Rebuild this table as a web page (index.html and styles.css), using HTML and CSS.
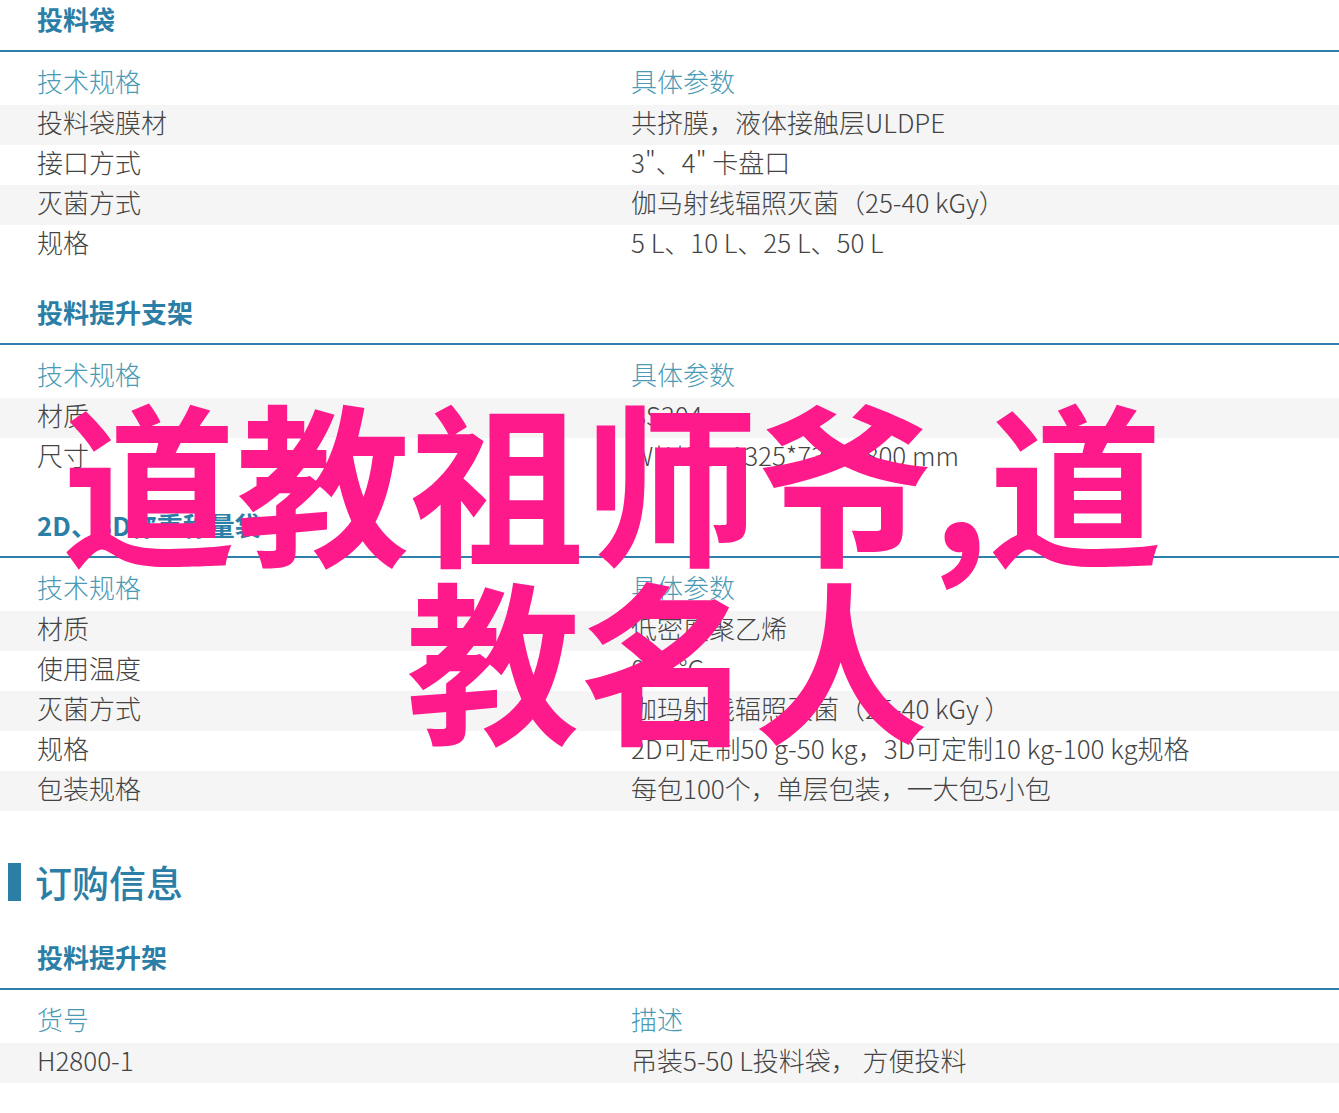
FILE: index.html
```html
<!DOCTYPE html>
<html lang="zh-CN">

<head>
  <meta charset="UTF-8">
  <meta name="viewport" content="width=device-width, initial-scale=1.0">
  <title>道教祖师爷,道教名人</title>

  <link rel="stylesheet" href="styles.css">
</head>

<body>
  <div id="page">
    <section class="spec">
      <h3 class="spec-title">投料袋</h3>
      <div class="spec-table">
        <div class="row head"><span>技术规格</span><span>具体参数</span></div>
        <div class="row"><span>投料袋膜材</span><span>共挤膜，液体接触层ULDPE</span></div>
        <div class="row"><span>接口方式</span><span>3"、4" 卡盘口</span></div>
        <div class="row"><span>灭菌方式</span><span>伽马射线辐照灭菌（25-40 kGy）</span></div>
        <div class="row"><span>规格</span><span>5 L、10 L、25 L、50 L</span></div>
      </div>
    </section>

    <section class="spec">
      <h3 class="spec-title">投料提升支架</h3>
      <div class="spec-table">
        <div class="row head"><span>技术规格</span><span>具体参数</span></div>
        <div class="row"><span>材质</span><span>SS304</span></div>
        <div class="row"><span>尺寸</span><span>W*L*H：1325*730*1800 mm</span></div>
      </div>
    </section>

    <section class="spec">
      <h3 class="spec-title">2D、3D称重称量袋</h3>
      <div class="spec-table">
        <div class="row head"><span>技术规格</span><span>具体参数</span></div>
        <div class="row"><span>材质</span><span>低密度聚乙烯</span></div>
        <div class="row"><span>使用温度</span><span>0~4 °C</span></div>
        <div class="row"><span>灭菌方式</span><span>伽玛射线辐照灭菌（25-40 kGy ）</span></div>
        <div class="row"><span>规格</span><span>2D可定制50 g-50 kg，3D可定制10 kg-100 kg规格</span></div>
        <div class="row"><span>包装规格</span><span>每包100个，单层包装，一大包5小包</span></div>
      </div>
    </section>

    <h2 class="block-title">订购信息</h2>

    <section class="spec">
      <h3 class="spec-title">投料提升架</h3>
      <div class="spec-table">
        <div class="row head"><span>货号</span><span>描述</span></div>
        <div class="row"><span>H2800-1</span><span>吊装5-50 L投料袋， 方便投料</span></div>
      </div>
    </section>
  </div>

  <h1 class="watermark">
    <span class="line-a">道教祖师爷,道</span>
    <span class="line-b">教名人</span>
  </h1>
</body>

</html>
```

FILE: styles.css
```css
body {
  margin: 0;
  color: #444;
  font-family: "Noto Sans CJK SC", "Noto Sans", sans-serif;
  font-weight: 300;
  background: #fff;
}

#page {
  display: flex;
  flex-direction: column;
}

.spec {
  margin-top: 28px;
}

.spec:first-child {
  margin-top: 0;
}

.spec-title {
  margin: 0;
  padding: 0 0 12px 37px;
  border-bottom: 2px solid #2f80ab;
  color: #2b7ea5;
  font-size: 26px;
  font-weight: 700;
  line-height: 38px;
}

.row {
  display: grid;
  grid-template-columns: 594px 1fr;
  padding: 0 0 6px 37px;
  font-size: 26px;
  line-height: 34px;
}

.row:nth-child(even) {
  background: #f5f5f5;
}

.row.head {
  padding-top: 12px;
  padding-bottom: 7px;
  color: #4a9ab5;
}

.block-title {
  margin: 52px 0 9px 8px;
  padding-left: 14px;
  border-left: 13px solid #2b7ea5;
  color: #2b7ea5;
  font-size: 37px;
  font-weight: 500;
  line-height: 38px;
}

.watermark {
  position: absolute;
  top: 388px;
  left: 0;
  width: 1339px;
  margin: 0;
  color: #ff1a8c;
  font-size: 174px;
  font-weight: 700;
  line-height: 178px;
}

.watermark span {
  display: block;
  white-space: nowrap;
}

.line-a {
  padding-left: 62px;
}

.line-b {
  padding-left: 406px;
}
```
